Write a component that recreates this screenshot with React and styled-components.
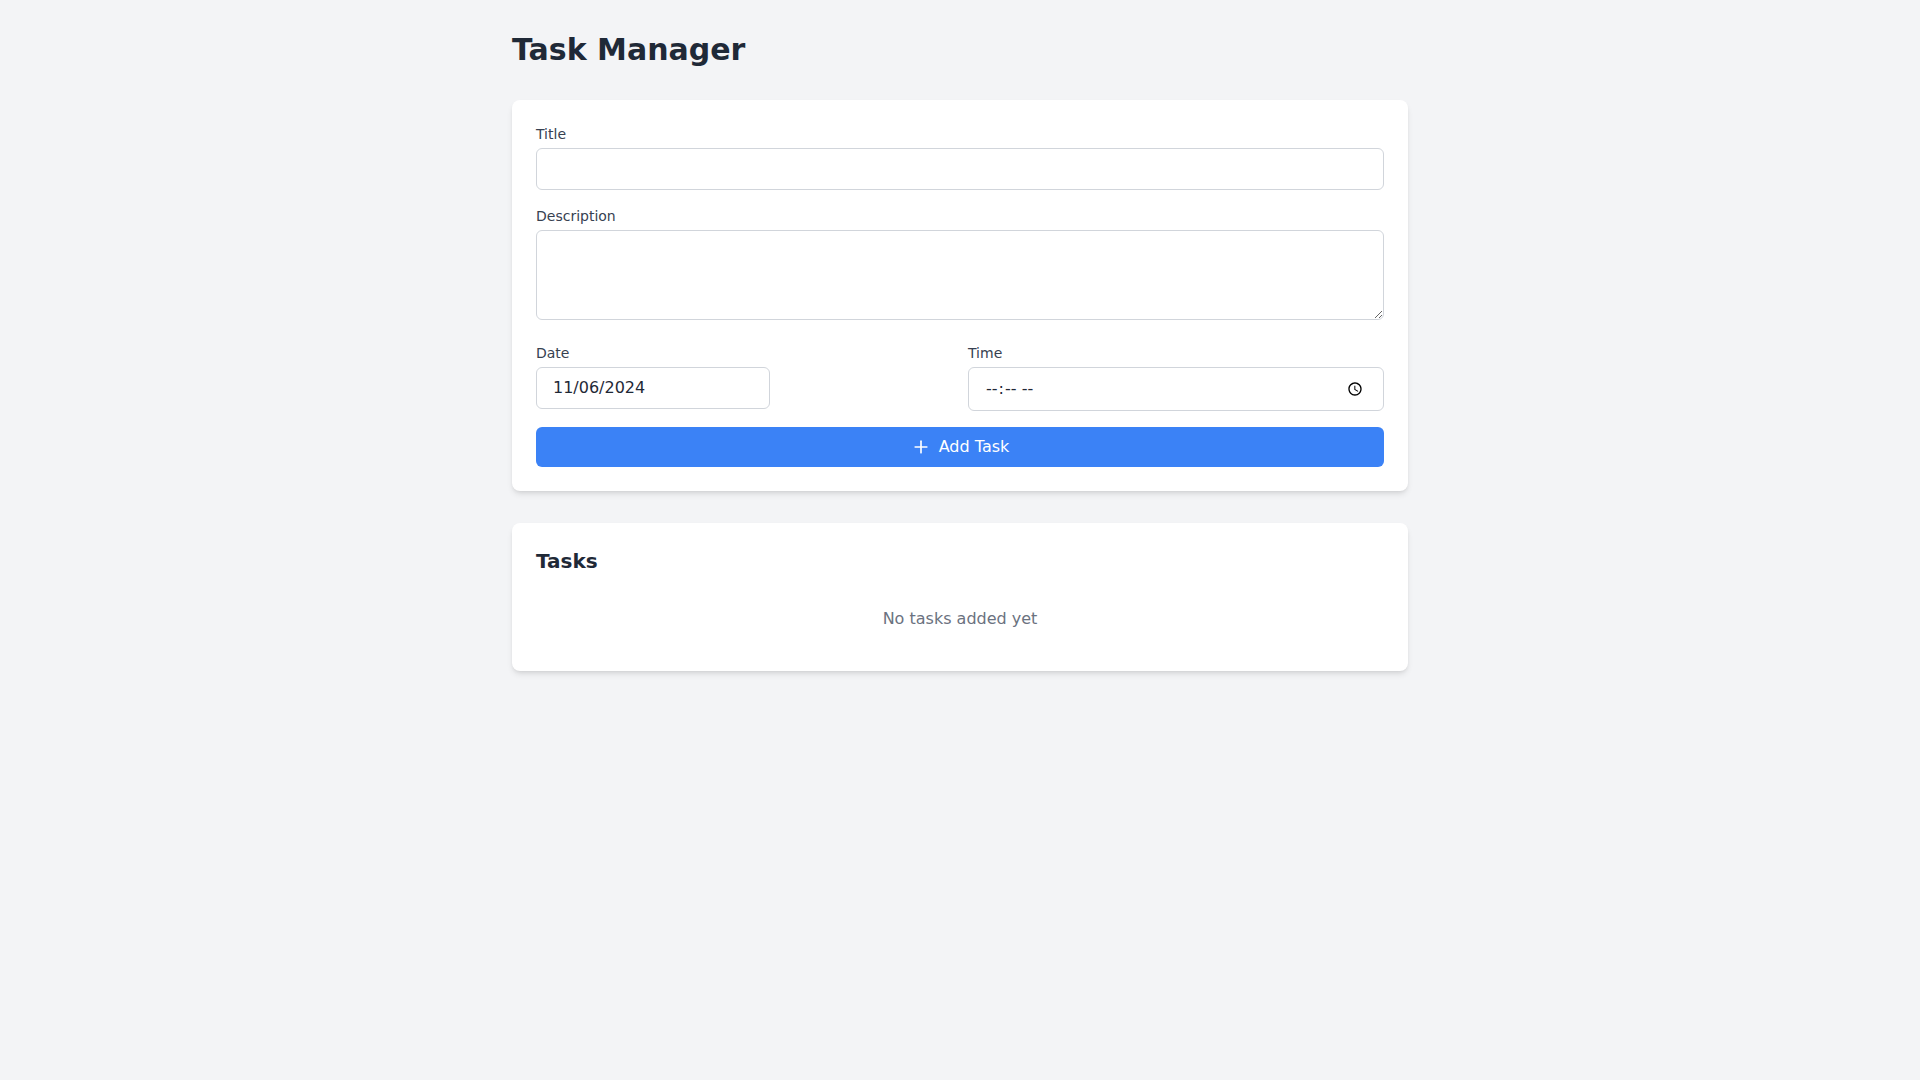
import React, { useState } from 'react';
import styled, { createGlobalStyle } from 'styled-components';
import { Plus } from 'lucide-react';

const GlobalStyle = createGlobalStyle`
    * {
        box-sizing: border-box;
    }
    body {
        margin: 0;
        background: #f3f4f6;
        font-family: "DejaVu Sans", sans-serif;
        line-height: 1.5;
    }
`

const Page = styled.div`
    min-height: 100vh;
    padding: 32px;
    background: #f3f4f6;
`

const Container = styled.div`
    max-width: 896px;
    margin: 0 auto;
`

const Heading = styled.h1`
    margin: 0 0 32px;
    font-size: 30px;
    line-height: 36px;
    font-weight: 700;
    color: #1f2937;
`

const Card = styled.div`
    margin-bottom: 32px;
    padding: 24px;
    background: #fff;
    border-radius: 8px;
    box-shadow: 0 4px 6px -1px rgba(0, 0, 0, 0.1), 0 2px 4px -2px rgba(0, 0, 0, 0.1);
`

const Field = styled.div`
    margin-bottom: 16px;
`

const Label = styled.label`
    display: block;
    margin-bottom: 4px;
    font-size: 14px;
    line-height: 20px;
    font-weight: 500;
    color: #374151;
`

const Input = styled.input`
    width: ${props => props.$width || '100%'};
    padding: 8px 16px;
    border: 1px solid #d1d5db;
    border-radius: 6px;
    background: #fff;
    font-family: inherit;
    font-size: 16px;
    line-height: 24px;
    color: #1f2937;
    outline: none;
`

const TextArea = styled.textarea`
    width: 100%;
    padding: 8px 16px;
    border: 1px solid #d1d5db;
    border-radius: 6px;
    background: #fff;
    font-family: inherit;
    font-size: 16px;
    line-height: 24px;
    color: #1f2937;
    outline: none;
`

const TwoCols = styled.div`
    display: grid;
    grid-template-columns: 1fr 1fr;
    gap: 16px;
    margin-bottom: 16px;
`

const AddButton = styled.button`
    width: 100%;
    height: 40px;
    display: flex;
    align-items: center;
    justify-content: center;
    gap: 8px;
    padding: 8px 16px;
    border: none;
    border-radius: 6px;
    background: #3b82f6;
    color: #fff;
    font-family: inherit;
    font-size: 16px;
    line-height: 24px;
    cursor: pointer;
`

const SubHeading = styled.h2`
    margin: 0 0 16px;
    font-size: 20px;
    line-height: 28px;
    font-weight: 600;
    color: #1f2937;
`

const Empty = styled.p`
    margin: 0;
    padding: 16px 0;
    text-align: center;
    font-size: 16px;
    line-height: 24px;
    color: #6b7280;
`

export default function App() {
    const [title, setTitle] = useState('')
    const [description, setDescription] = useState('')
    const [date, setDate] = useState('11/06/2024')
    const [time, setTime] = useState('')

    return (
        <Page>
            <GlobalStyle />
            <Container>
                <Heading>Task Manager</Heading>
                <Card>
                    <Field>
                        <Label>Title</Label>
                        <Input type="text" value={title} onChange={e => setTitle(e.target.value)} />
                    </Field>
                    <Field>
                        <Label>Description</Label>
                        <TextArea rows={3} value={description} onChange={e => setDescription(e.target.value)} />
                    </Field>
                    <TwoCols>
                        <div>
                            <Label>Date</Label>
                            <Input type="text" $width="234px" value={date} onChange={e => setDate(e.target.value)} />
                        </div>
                        <div>
                            <Label>Time</Label>
                            <Input type="time" value={time} onChange={e => setTime(e.target.value)} />
                        </div>
                    </TwoCols>
                    <AddButton type="button">
                        <Plus size={20} />
                        Add Task
                    </AddButton>
                </Card>
                <Card>
                    <SubHeading>Tasks</SubHeading>
                    <Empty>No tasks added yet</Empty>
                </Card>
            </Container>
        </Page>
    );
}
